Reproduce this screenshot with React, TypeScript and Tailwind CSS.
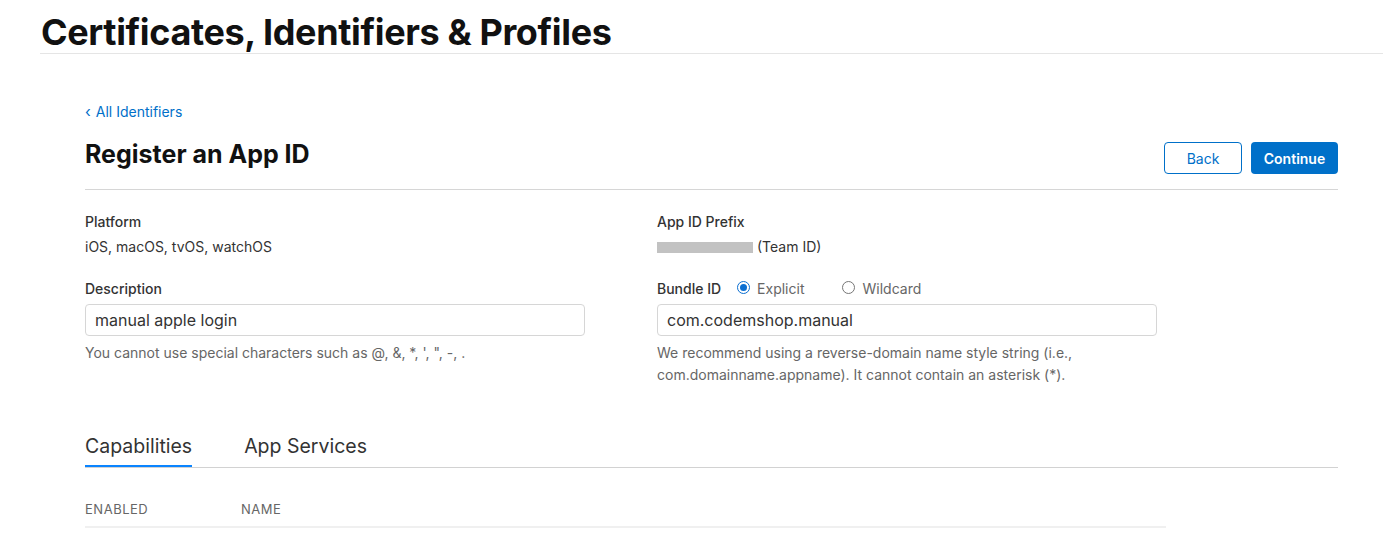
import React, { useState } from "react";

const font = { fontFamily: "Inter, 'Noto Sans', sans-serif" };

function Radio({ checked, label }: { checked: boolean; label: string }) {
  return (
    <label className="flex items-center gap-[7px] text-[14px] text-[#666]">
      <span
        className={
          checked
            ? "mb-[4px] w-[13px] h-[13px] rounded-full border-[1.5px] border-[#0a6ed1] flex items-center justify-center"
            : "mb-[4px] w-[13px] h-[13px] rounded-full border border-[#767676] bg-white"
        }
      >
        {checked && <span className="w-[7px] h-[7px] rounded-full bg-[#0a6ed1]" />}
      </span>
      {label}
    </label>
  );
}

export default function App() {
  const [tab, setTab] = useState("capabilities");

  return (
    <div className="w-[1393px] h-[536px] bg-white overflow-hidden" style={font}>
      <header className="pl-[40px] pr-[10px] pt-[10px]">
        <h1 className="text-[36px] leading-[44px] font-bold tracking-[-0.01em] text-[#111] pl-px">
          Certificates, Identifiers &amp; Profiles
        </h1>
        <div className="h-px bg-[#e5e5e5] mt-[-1px]" />
      </header>

      <main className="pl-[85px] pr-[55px] pt-[47px]">
        <a className="flex items-center gap-[5px] text-[14px] leading-[22px] text-[#0070c9]">
          <span className="text-[15px]">‹</span>All Identifiers
        </a>

        <div className="flex items-center justify-between mt-[10px] pb-[15px] border-b border-[#d6d6d6]">
          <h2 className="text-[25px] leading-[32px] font-bold text-[#111]">Register an App ID</h2>
          <div className="flex gap-[9px] mt-[9px]">
            <button className="w-[78px] h-[32px] rounded-[4px] border border-[#0070c9] text-[#0070c9] text-[14px]">
              Back
            </button>
            <button className="w-[87px] h-[32px] rounded-[4px] bg-[#0070c9] text-white text-[14px] font-semibold">
              Continue
            </button>
          </div>
        </div>

        <div className="grid grid-cols-[572px_1fr] mt-[21px] text-[14px]">
          <div>
            <div className="leading-[22px] font-medium text-[#333]">Platform</div>
            <div className="leading-[22px] mt-[3px] text-[#333]">iOS, macOS, tvOS, watchOS</div>
            <div className="leading-[22px] mt-[20px] font-medium text-[#333]">Description</div>
            <input
              readOnly
              value="manual apple login"
              className="mt-[4px] w-[500px] h-[32px] px-[9px] rounded-[4px] border border-[#d6d6d6] text-[16px] text-[#333] outline-none"
            />
            <div className="mt-[6px] leading-[22px] text-[14px] text-[#666]">
              You cannot use special characters such as @, &amp;, *, ', ", -, .
            </div>
          </div>
          <div>
            <div className="leading-[22px] font-medium text-[#333]">App ID Prefix</div>
            <div className="flex items-center gap-[4px] leading-[22px] mt-[3px] text-[#333]">
              <span className="w-[96px] h-[11px] bg-[#c2c2c2]" />
              (Team ID)
            </div>
            <div className="flex items-center leading-[22px] mt-[20px]">
              <span className="font-medium text-[#333] mr-[16px]">Bundle ID</span>
              <Radio checked label="Explicit" />
              <span className="w-[38px]" />
              <Radio checked={false} label="Wildcard" />
            </div>
            <input
              readOnly
              value="com.codemshop.manual"
              className="mt-[4px] w-[500px] h-[32px] px-[9px] rounded-[4px] border border-[#d6d6d6] text-[16px] text-[#333] outline-none"
            />
            <div className="mt-[6px] leading-[22px] text-[14px] text-[#666]">
              We recommend using a reverse-domain name style string (i.e.,
              <br />
              com.domainname.appname). It cannot contain an asterisk (*).
            </div>
          </div>
        </div>

        <div className="flex gap-[52px] mt-[47px] border-b border-[#d2d2d2] text-[19.5px]">
          {[
            ["capabilities", "Capabilities"],
            ["services", "App Services"],
          ].map(([key, label]) => (
            <button
              key={key}
              onClick={() => setTab(key)}
              className={
                tab === key
                  ? "pb-[6px] leading-[26px] text-[#333] border-b-2 border-[#0a84ff]"
                  : "pb-[6px] leading-[26px] text-[#333] border-b-2 border-transparent"
              }
            >
              {label}
            </button>
          ))}
        </div>

        <div className="w-[1081px] flex mt-[31px] pb-[7px] border-b-2 border-[#f0f0f0] text-[13px] leading-[20px] text-[#666] tracking-[0.04em]">
          <span className="w-[156px]">ENABLED</span>
          <span>NAME</span>
        </div>
      </main>
    </div>
  );
}
